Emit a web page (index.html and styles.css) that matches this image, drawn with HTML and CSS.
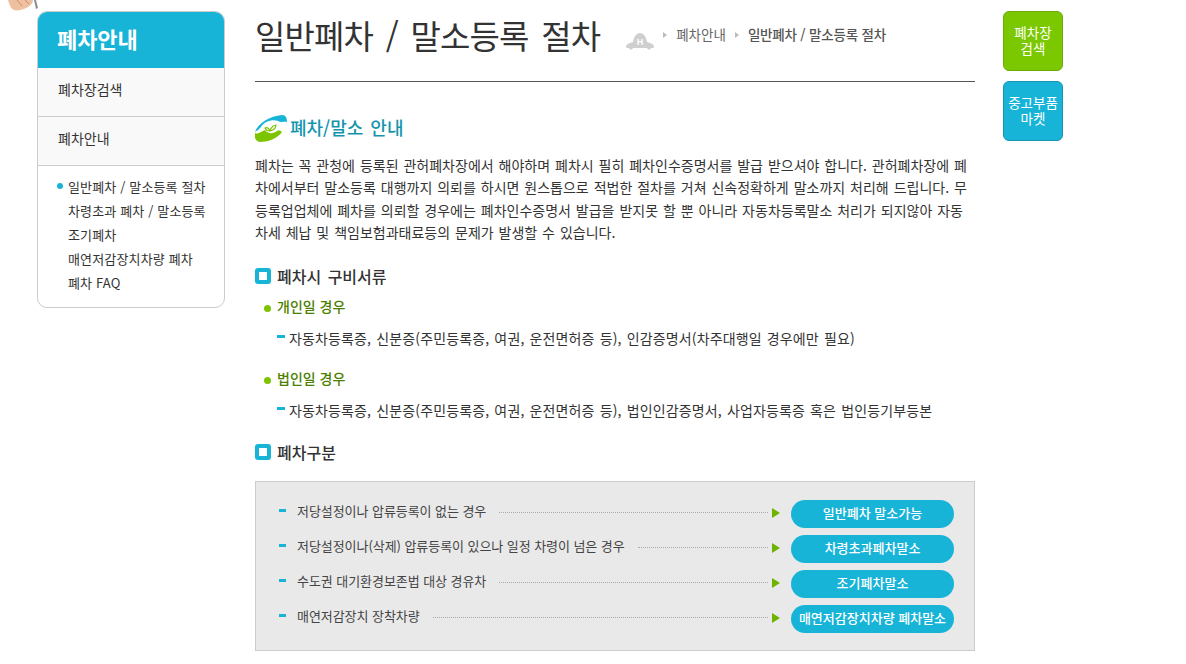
FILE: index.html
```html
<!DOCTYPE html>
<html lang="ko">
<head>
<meta charset="utf-8">
<title>일반폐차 / 말소등록 절차</title>
<link rel="stylesheet" href="styles.css">
</head>
<body>
<div class="deco">
  <svg width="40" height="11" viewBox="0 0 40 11"><path d="M8 0 H33 C33 3 31 5 28 7 C23 10 17 11 14 10 C11 9 9 4 8 0Z" fill="#efc0a0"/><path d="M17 0 L22 6 M25 0 L29 4" stroke="#c98d78" stroke-width="1" fill="none"/><path d="M34 0 H36 L38 8 L36 9Z" fill="#8a8f96"/></svg>
</div>
<div class="page">
  <aside class="side">
    <h2 class="side-title">폐차안내</h2>
    <a class="side-item">폐차장검색</a>
    <a class="side-item">폐차안내</a>
    <ul class="side-sub">
      <li class="on">일반폐차 / 말소등록 절차</li>
      <li>차령초과 폐차 / 말소등록</li>
      <li>조기폐차</li>
      <li>매연저감장치차량 폐차</li>
      <li>폐차 FAQ</li>
    </ul>
  </aside>
  <main class="main">
    <header class="head">
      <h1>일반폐차 / 말소등록 절차</h1>
      <nav class="crumb">
        <svg class="home" width="28" height="17" viewBox="0 0 28 17"><path d="M0 14 C0 11 4 10 7 9 C8 3 11 0 14 0 C17 0 20 3 21 9 C24 10 28 11 28 14 C28 15 27 15 25 15 C24 17 22 17 21 15 H7 C6 17 4 17 3 15 C1 15 0 15 0 14Z" fill="#cfcfcf"/><text x="14" y="12" text-anchor="middle" class="home-h">H</text></svg>
        <i class="tri"></i><span>폐차안내</span>
        <i class="tri"></i><b>일반폐차 / 말소등록 절차</b>
      </nav>
    </header>
    <h3 class="lead">
      <svg class="lead-icon" width="32" height="27" viewBox="0 0 32 27"><path d="M0 17 C3 8 15 1 27 0 C31 0 32 3 32 7 C29 6 26 8 23 6 C17 4 9 7 6 12 C4 14 2 16 0 17Z" fill="#18b4d8"/><path d="M0 18 C4 20 6 16 10 15 C13 19 18 19 22 16 C24 15 26 16 27 17 C22 24 12 27 5 27 C0 26 -1 22 0 18Z" fill="#7cc300"/><path d="M15 16 C14 13 12 12 10 13 C11 15 13 16 15 16Z M15 16 C16 12 19 10 21 10 C21 13 19 15 15 16Z" fill="none" stroke="#7cc300" stroke-width="1.2"/></svg>
      폐차/말소 안내
    </h3>
    <p class="intro">폐차는 꼭 관청에 등록된 관허폐차장에서 해야하며 폐차시 필히 폐차인수증명서를 발급 받으셔야 합니다. 관허폐차장에 폐차에서부터 말소등록 대행까지 의뢰를 하시면 원스톱으로 적법한 절차를 거쳐 신속정확하게 말소까지 처리해 드립니다. 무등록업업체에 폐차를 의뢰할 경우에는 폐차인수증명서 발급을 받지못 할 뿐 아니라 자동차등록말소 처리가 되지않아 자동차세 체납 및 책임보험과태료등의 문제가 발생할 수 있습니다.</p>
    <h4 class="sec first">폐차시 구비서류</h4>
    <h5 class="case">개인일 경우</h5>
    <p class="dash">자동차등록증, 신분증(주민등록증, 여권, 운전면허증 등), 인감증명서(차주대행일 경우에만 필요)</p>
    <h5 class="case second">법인일 경우</h5>
    <p class="dash">자동차등록증, 신분증(주민등록증, 여권, 운전면허증 등), 법인인감증명서, 사업자등록증 혹은 법인등기부등본</p>
    <h4 class="sec last">폐차구분</h4>
    <div class="panel">
      <div class="row"><span class="label">저당설정이나 압류등록이 없는 경우</span><i class="dots"></i><i class="arrow"></i><span class="pill">일반폐차 말소가능</span></div>
      <div class="row"><span class="label">저당설정이나(삭제) 압류등록이 있으나 일정 차령이 넘은 경우</span><i class="dots"></i><i class="arrow"></i><span class="pill">차령초과폐차말소</span></div>
      <div class="row"><span class="label">수도권 대기환경보존법 대상 경유차</span><i class="dots"></i><i class="arrow"></i><span class="pill">조기폐차말소</span></div>
      <div class="row"><span class="label">매연저감장치 장착차량</span><i class="dots"></i><i class="arrow"></i><span class="pill">매연저감장치차량 폐차말소</span></div>
    </div>
  </main>
  <div class="quick">
    <a class="qbtn green">폐차장<br>검색</a>
    <a class="qbtn blue">중고부품<br>마켓</a>
  </div>
</div>
</body>
</html>
```
FILE: styles.css
```css
*, *::before, *::after { box-sizing: border-box; }
html, body { margin: 0; padding: 0; height: 664px; overflow: hidden; background: #fff; }
body { font-family: "Noto Sans CJK KR", "Noto Sans", sans-serif; color: #333; position: relative; }
.deco { position: absolute; left: 0; top: 0; line-height: 0; }
.page { display: flex; align-items: flex-start; padding: 11px 0 0 37px; }
.side { width: 188px; flex: none; border: 1px solid #ccc; border-radius: 10px; overflow: hidden; padding-bottom: 12px; }
.side-title { margin: -1px -1px 0; height: 57px; background: #18b4d8; color: #fff; font-size: 22px; font-weight: 700; line-height: 54px; padding-left: 20px; letter-spacing: -0.1px; }
.side-item { display: block; height: 49px; background: #f9f9f9; border-bottom: 1px solid #ccc; font-size: 14px; line-height: 42px; padding-left: 20px; color: #333; }
.side-sub { list-style: none; margin: 0; padding: 9px 0 0 30px; font-size: 13px; line-height: 24px; letter-spacing: 0.15px; color: #333; }
.side-sub li { position: relative; white-space: nowrap; }
.side-sub .on::before { content: ""; position: absolute; left: -11px; top: 8px; width: 6px; height: 6px; border-radius: 50%; background: #18b4d8; }
.main { width: 720px; flex: none; margin-left: 30px; }
.head { height: 71px; border-bottom: 1px solid #555; display: flex; align-items: flex-start; }
.head h1 { margin: 0; font-size: 33px; font-weight: 400; line-height: 48px; color: #333; letter-spacing: -0.9px; word-spacing: 4.5px; white-space: nowrap; }
.crumb { display: flex; align-items: flex-start; margin: 13px 0 0 26px; font-size: 13.5px; line-height: 20px; color: #666; white-space: nowrap; }
.crumb b { font-weight: 500; color: #555; letter-spacing: -0.2px; }
.home { margin: 9px 9px 0 0; }
.home-h { font: 700 9px "Liberation Sans", sans-serif; fill: #fff; }
.tri { width: 0; height: 0; border-left: 4px solid #bbb; border-top: 3px solid transparent; border-bottom: 3px solid transparent; margin: 8px 9px 0 0; }
.crumb span + .tri { margin-left: 9px; }
.lead { display: flex; align-items: center; gap: 3px; margin: 30px 0 0; height: 30px; font-size: 18px; font-weight: 500; color: #1595ad; word-spacing: 2px; }
.lead-icon { margin-top: 3px; }
.intro { margin: 12px 0 0; font-size: 14px; line-height: 22.4px; color: #333; word-spacing: 1px; word-break: break-all; }
.sec { position: relative; margin: 0; padding-left: 22px; font-size: 16px; font-weight: 500; color: #333; line-height: 24px; word-spacing: 2px; }
.sec::before { content: ""; position: absolute; left: 0; top: 4px; width: 16px; height: 16px; border: 4px solid #18b4d8; border-radius: 3px; background: #fff; }
.sec.first { margin-top: 20px; }
.sec.last { margin-top: 20px; }
.case { position: relative; margin: 8px 0 0; padding-left: 22px; font-size: 14px; font-weight: 500; color: #4b8000; line-height: 20px; }
.case::before { content: ""; position: absolute; left: 9px; top: 9px; width: 7px; height: 7px; border-radius: 50%; background: #7cc300; }
.case.second { margin-top: 20px; }
.dash { position: relative; margin: 12px 0 0; padding-left: 34px; font-size: 14px; line-height: 20px; letter-spacing: 0.14px; color: #333; white-space: nowrap; word-spacing: 1px; }
.dash::before { content: ""; position: absolute; left: 22px; top: 7px; width: 8px; height: 3px; background: #18b4d8; }
.panel { margin-top: 17px; height: 170px; background: #e9e9e9; border: 1px solid #ccc; padding: 18px 20px 0 23px; }
.row { display: flex; align-items: center; height: 28px; margin-bottom: 7px; }
.row .label { position: relative; padding-left: 18px; margin-bottom: 6px; font-size: 13px; color: #444; white-space: nowrap; letter-spacing: -0.06px; }
.row .label::before { content: ""; position: absolute; left: 0; top: 8px; width: 7px; height: 3px; background: #18b4d8; }
.dots { flex: 1; margin: 0 4px 2px 13px; border-top: 1px dotted #aaa; }
.arrow { width: 0; height: 0; border-left: 8px solid #6db300; border-top: 5px solid transparent; border-bottom: 5px solid transparent; margin: 0 11px 2px 0; }
.pill { width: 163px; height: 28px; border-radius: 14px; background: #18b4d8; color: #fff; font-size: 13px; font-weight: 500; line-height: 26px; text-align: center; white-space: nowrap; }
.quick { display: flex; flex-direction: column; gap: 10px; margin-left: 28px; }
.qbtn { display: flex; align-items: center; justify-content: center; text-align: center; width: 60px; height: 60px; padding-bottom: 3px; border-radius: 6px; color: #fff; font-size: 13.5px; line-height: 16px; }
.green { background: #7cc800; border: 1px solid #6dab0a; }
.blue { background: #18b4d8; border: 1px solid #1495b3; }
```
